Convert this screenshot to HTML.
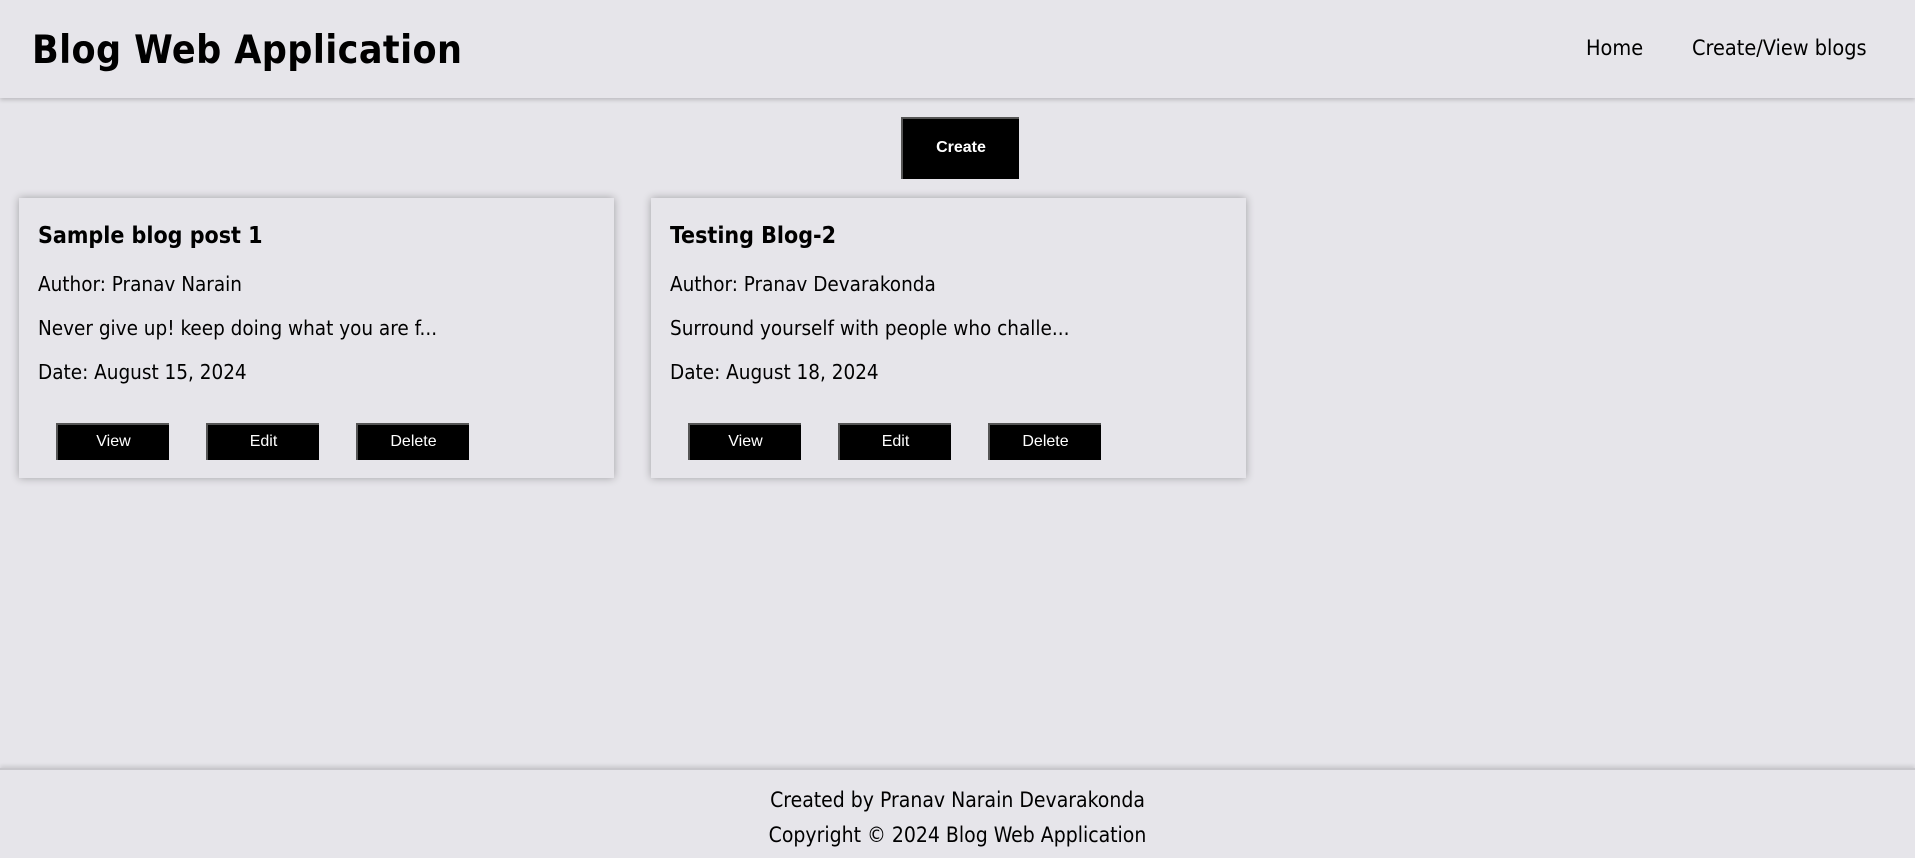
<!DOCTYPE html>
<html><head><meta charset="utf-8"><style>
*{box-sizing:border-box;margin:0;padding:0}
body{width:1915px;height:858px;background:#e6e5ea;font-family:"DejaVu Sans Condensed","Liberation Sans",sans-serif;color:#000;position:relative;overflow:hidden}
header{position:absolute;left:0;top:0;width:1915px;height:98px;background:#e6e5ea;box-shadow:0 2px 4px rgba(0,0,0,.18)}
h1{position:absolute;left:32px;top:28px;font-size:39px;font-weight:bold;letter-spacing:0.4px}
nav a{position:absolute;top:36px;font-size:21.5px;color:#000;text-decoration:none}
.btn{position:absolute;background:#000;color:#fff;font-family:"Liberation Sans",sans-serif;text-align:center;border-top:2px solid #555;border-left:2px solid #555}
.card{position:absolute;top:198px;width:595px;height:280px;background:#e6e5ea;box-shadow:0 0 8px rgba(0,0,0,.3)}
.card h2{position:absolute;left:19px;top:25px;font-size:23px;font-weight:bold}
.card p{position:absolute;left:19px;font-size:20.5px}
.card .btn{top:225px;width:113px;height:37px;line-height:33px;font-size:16px}
footer{position:absolute;left:0;top:768px;width:1915px;height:90px;border-top:2px solid #c8c7cc;box-shadow:0 -2px 4px rgba(0,0,0,.12);text-align:center;font-size:21px}
</style></head><body>
<header><h1>Blog Web Application</h1>
<nav><a style="left:1586px">Home</a><a style="left:1692px">Create/View blogs</a></nav></header>
<div class="btn" style="left:901px;top:117px;width:118px;height:62px;line-height:58px;font-size:16px;font-weight:bold">Create</div>
<div class="card" style="left:19px">
<h2>Sample blog post 1</h2>
<p style="top:74px">Author: Pranav Narain</p>
<p style="top:118px">Never give up! keep doing what you are f...</p>
<p style="top:162px">Date: August 15, 2024</p>
<div class="btn" style="left:37px">View</div><div class="btn" style="left:187px">Edit</div><div class="btn" style="left:337px">Delete</div>
</div>
<div class="card" style="left:651px">
<h2>Testing Blog-2</h2>
<p style="top:74px">Author: Pranav Devarakonda</p>
<p style="top:118px">Surround yourself with people who challe...</p>
<p style="top:162px">Date: August 18, 2024</p>
<div class="btn" style="left:37px">View</div><div class="btn" style="left:187px">Edit</div><div class="btn" style="left:337px">Delete</div>
</div>
<footer><div style="margin-top:18px">Created by Pranav Narain Devarakonda</div><div style="margin-top:11px">Copyright © 2024 Blog Web Application</div></footer>
</body></html>
